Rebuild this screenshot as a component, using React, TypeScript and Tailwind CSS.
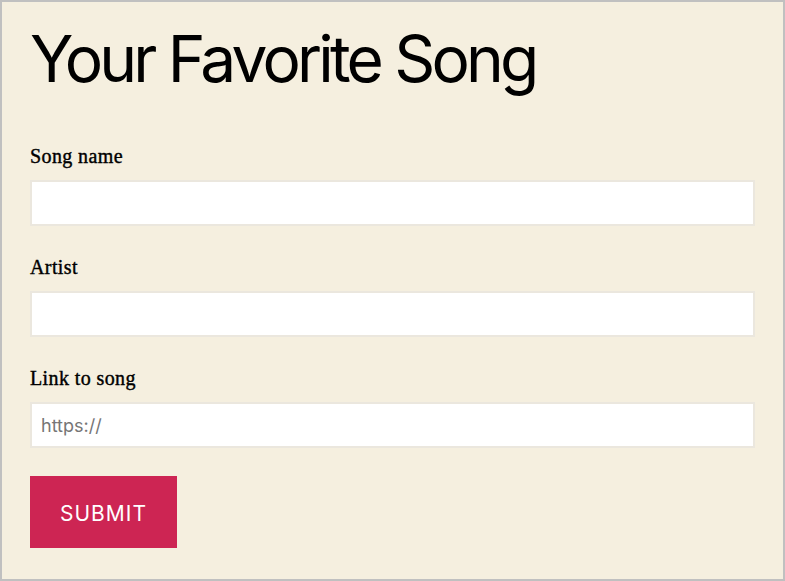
export default function App() {
  return (
    <div className="w-[785px] h-[581px] border-2 border-[#c0c0c0] bg-[#f5efdf] px-[28px] pt-[25px] box-border">
      <h1 className="text-[64px] leading-none font-normal text-black tracking-[-3.8px] font-['Inter',sans-serif]">
        Your Favorite Song
      </h1>
      <form className="mt-[54px] flex flex-col" onSubmit={(e) => e.preventDefault()}>
        <div className="flex flex-col gap-[30px]">
          <Field label="Song name" />
          <Field label="Artist" />
          <Field label="Link to song" placeholder="https://" />
        </div>
        <button
          type="submit"
          className="mt-[28px] w-[147px] h-[72px] pt-[3px] bg-[#cd2553] text-white text-[21px] tracking-[1px] font-['Inter',sans-serif]"
        >
          SUBMIT
        </button>
      </form>
    </div>
  );
}

function Field({ label, placeholder }: { label: string; placeholder?: string }) {
  return (
    <label className="flex flex-col">
      <span className="text-[20px] leading-[22px] font-normal tracking-[0.4px] text-black font-['Liberation_Serif',serif] [-webkit-text-stroke:0.4px_black]">
        {label}
      </span>
      <input
        type="text"
        placeholder={placeholder}
        className="mt-[13px] w-[725px] h-[46px] bg-white border-2 border-[#ebe7de] px-[9px] text-[18px] placeholder:text-[#767676] outline-none font-['Inter',sans-serif]"
      />
    </label>
  );
}
